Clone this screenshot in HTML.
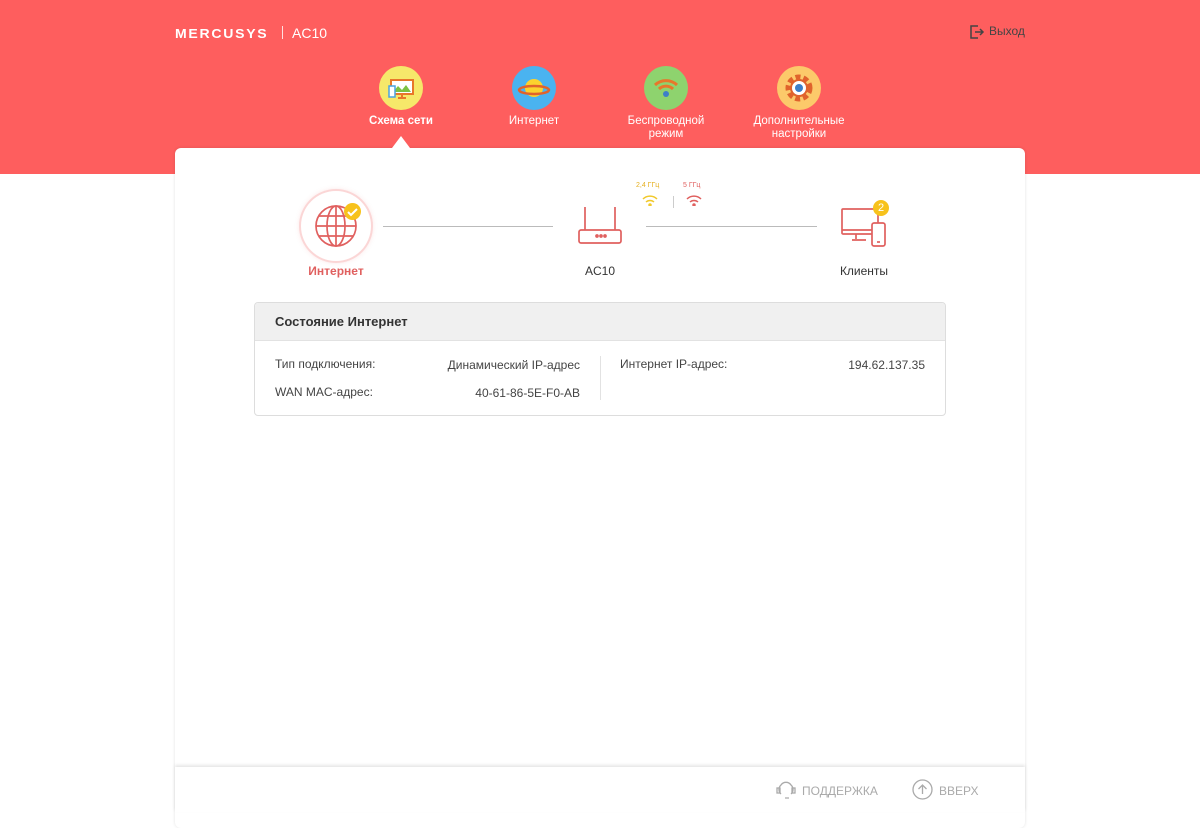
<!DOCTYPE html>
<html><head><meta charset="utf-8"><style>
*{margin:0;padding:0;box-sizing:border-box}
body{width:1200px;height:812px;overflow:hidden;background:#fff;font-family:"Liberation Sans",sans-serif;position:relative}
.hdr{position:absolute;left:0;top:0;width:1200px;height:174px;background:#fe5e5e}
.logo{position:absolute;left:175px;top:26px;color:#fff;font-size:13px;font-weight:bold;letter-spacing:1.6px;transform:scaleX(1.08);transform-origin:left}
.model{position:absolute;left:292px;top:25px;color:#fff;font-size:14px}
.sep{position:absolute;left:282px;top:26px;width:1px;height:13px;background:rgba(255,255,255,.8)}
.exit{position:absolute;left:969px;top:24px;color:#444;font-size:12px}
.nav{position:absolute;top:66px;width:120px;text-align:center;color:#fff;font-size:11.5px;line-height:13px}
.nav .c{width:44px;height:44px;border-radius:50%;margin:0 auto 5px}
.card{position:absolute;left:175px;top:148px;width:850px;height:680px;background:#fff;border-radius:6px;box-shadow:0 0 3px rgba(0,0,0,.12)}
.tri{position:absolute;left:392px;top:136px;width:0;height:0;border-left:9px solid transparent;border-right:9px solid transparent;border-bottom:12px solid #fff}
.lbl{position:absolute;font-size:12px;color:#333;text-align:center;width:100px}
.line{position:absolute;top:226px;height:1px;background:#bbb}
.box{position:absolute;left:254px;top:302px;width:692px;height:114px;border:1px solid #ddd;border-radius:4px;overflow:hidden}
.box .t{height:38px;background:#f0f0f0;border-bottom:1px solid #e2e2e2;padding-left:20px;line-height:38px;font-size:13px;font-weight:bold;color:#333}
.r{position:absolute;font-size:12px;color:#444}
.foot{position:absolute;left:175px;top:767px;width:850px;height:45px;background:#fff;box-shadow:0 -2px 3px rgba(0,0,0,.1)}
.fl{position:absolute;font-size:12px;color:#aaa;top:784px}
</style></head><body>
<div class="hdr"></div>
<div class="logo">MERCUSYS</div>
<div class="sep"></div>
<div class="model">AC10</div>
<svg style="position:absolute;left:969px;top:24px" width="16" height="16" viewBox="0 0 16 16" fill="none" stroke="#444" stroke-width="1.5"><path d="M9 2H2v12h7M6 8h8M11 5l3 3-3 3"/></svg>
<div class="exit" style="left:989px">Выход</div>

<div class="nav" style="left:341px"><div class="c" style="background:#f6e86a"><svg width="44" height="44"><rect x="12" y="14" width="22" height="14" fill="#fff" stroke="#e8772a" stroke-width="2"/><path d="M14 26l5-6 4 4 4-5 5 7z" fill="#7cc242"/><rect x="10" y="20" width="6" height="11" fill="#fff" stroke="#4aa3df" stroke-width="1.5"/><path d="M23 28v4M19 32h8" stroke="#e8772a" stroke-width="2"/></svg></div><b>Схема сети</b></div>
<div class="nav" style="left:474px"><div class="c" style="background:#4ab3f0"><svg width="44" height="44"><circle cx="22" cy="22" r="9" fill="#fcd22e"/><ellipse cx="22" cy="24" rx="15" ry="4" fill="none" stroke="#e0632c" stroke-width="2.5"/></svg></div>Интернет</div>
<div class="nav" style="left:606px"><div class="c" style="background:#8ed36e"><svg width="44" height="44" fill="none" stroke="#e8772a" stroke-width="3"><path d="M11 19a16 16 0 0 1 22 0M15 23a10 10 0 0 1 14 0"/><circle cx="22" cy="28" r="3" fill="#3d7fc8" stroke="none"/></svg></div>Беспроводной<br>режим</div>
<div class="nav" style="left:739px"><div class="c" style="background:#fcc96a"><svg width="44" height="44"><circle cx="22" cy="22" r="11" fill="none" stroke="#e0632c" stroke-width="5" stroke-dasharray="5 3"/><circle cx="22" cy="22" r="8" fill="#fff" stroke="#e0632c" stroke-width="2"/><circle cx="22" cy="22" r="4" fill="#3d7fc8"/></svg></div>Дополнительные<br>настройки</div>

<div class="card"></div>
<div class="tri"></div>

<div style="position:absolute;left:301px;top:191px;width:70px;height:70px;border-radius:50%;background:#fff;box-shadow:0 0 0 2px #fbd6d6,0 0 6px rgba(232,100,100,.35)"></div>
<svg style="position:absolute;left:313px;top:203px" width="46" height="46" fill="none" stroke="#e0605f" stroke-width="1.7"><circle cx="23" cy="23" r="20"/><ellipse cx="23" cy="23" rx="9" ry="20"/><path d="M23 3v40M3 23h40M6 13h34M6 33h34"/></svg>
<div style="position:absolute;left:344px;top:203px;width:17px;height:17px;border-radius:50%;background:#f7c21c"></div>
<svg style="position:absolute;left:344px;top:203px" width="17" height="17" fill="none" stroke="#fff" stroke-width="2"><path d="M4 9l3 3 6-6"/></svg>
<div class="lbl" style="left:286px;top:264px;color:#e0605f;font-weight:bold">Интернет</div>
<div class="line" style="left:383px;width:170px"></div>
<div class="line" style="left:646px;width:171px"></div>
<svg style="position:absolute;left:577px;top:206px" width="46" height="40" fill="none" stroke="#e0605f" stroke-width="1.7"><path d="M8 1v23M38 1v23"/><rect x="2" y="24" width="42" height="13" rx="2"/><circle cx="20" cy="30" r="1" fill="#e0605f"/><circle cx="24" cy="30" r="1" fill="#e0605f"/><circle cx="28" cy="30" r="1" fill="#e0605f"/></svg>
<div class="lbl" style="left:550px;top:264px">AC10</div>
<div style="position:absolute;left:636px;top:182px;font-size:7px;color:#e6b020">2,4 ГГц</div>
<div style="position:absolute;left:683px;top:182px;font-size:7px;color:#e0605f">5 ГГц</div>
<svg style="position:absolute;left:642px;top:194px" width="16" height="12" fill="none" stroke="#f1c92c" stroke-width="1.5"><path d="M1 5a10 10 0 0 1 14 0M4 8a6 6 0 0 1 8 0"/><circle cx="8" cy="11" r="1" fill="#f1c92c"/></svg>
<div style="position:absolute;left:673px;top:196px;width:1px;height:12px;background:#ccc"></div>
<svg style="position:absolute;left:686px;top:194px" width="16" height="12" fill="none" stroke="#e0605f" stroke-width="1.5"><path d="M1 5a10 10 0 0 1 14 0M4 8a6 6 0 0 1 8 0"/><circle cx="8" cy="11" r="1" fill="#e0605f"/></svg>
<svg style="position:absolute;left:840px;top:205px" width="50" height="44" fill="none" stroke="#e0605f" stroke-width="1.7"><rect x="2" y="4" width="36" height="25" rx="1"/><path d="M2 25h30M16 29v5M12 35h14"/><rect x="32" y="18" width="13" height="23" rx="2" fill="#fff"/><path d="M37 37h3"/></svg>
<div style="position:absolute;left:873px;top:200px;width:16px;height:16px;border-radius:50%;background:#f7c21c;color:#fff;font-size:11px;text-align:center;line-height:16px">2</div>
<div class="lbl" style="left:814px;top:264px">Клиенты</div>

<div class="box"><div class="t">Состояние Интернет</div></div>
<div class="r" style="left:275px;top:357px">Тип подключения:</div>
<div class="r" style="left:380px;top:358px;width:200px;text-align:right">Динамический IP-адрес</div>
<div class="r" style="left:275px;top:385px">WAN MAC-адрес:</div>
<div class="r" style="left:380px;top:386px;width:200px;text-align:right">40-61-86-5E-F0-AB</div>
<div style="position:absolute;left:600px;top:356px;width:1px;height:44px;background:#e2e2e2"></div>
<div class="r" style="left:620px;top:357px">Интернет IP-адрес:</div>
<div class="r" style="left:725px;top:358px;width:200px;text-align:right">194.62.137.35</div>

<div class="foot"></div>
<svg style="position:absolute;left:775px;top:780px" width="22" height="20" fill="none" stroke="#aaa" stroke-width="1.3"><path d="M6 14a6 6 0 0 1 0-9 6 6 0 0 1 10 0 6 6 0 0 1 0 9M10 18h4"/><rect x="2" y="8" width="3" height="5"/><rect x="17" y="8" width="3" height="5"/></svg>
<div class="fl" style="left:802px">ПОДДЕРЖКА</div>
<svg style="position:absolute;left:912px;top:779px" width="21" height="21" fill="none" stroke="#aaa" stroke-width="1.3"><circle cx="10.5" cy="10.5" r="9.5"/><path d="M10.5 15V6M6.5 10l4-4 4 4"/></svg>
<div class="fl" style="left:939px">ВВЕРХ</div>
</body></html>
